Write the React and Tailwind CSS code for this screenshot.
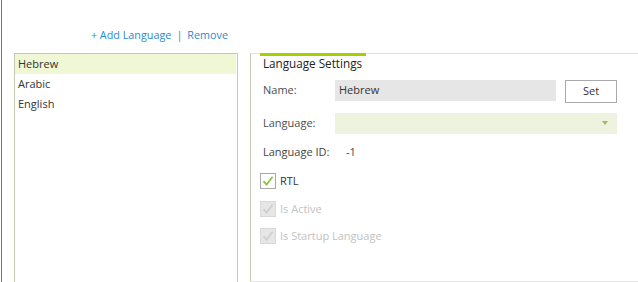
import React from "react";

const font = { fontFamily: '"Open Sans", "Noto Sans", sans-serif' };

function Check({ disabled }) {
  return (
    <div
      className={
        "w-4 h-4 flex items-center justify-center border " +
        (disabled ? "border-[#d9d9d9] bg-[#e6e6e6]" : "border-[#a8a8a8] bg-white")
      }
    >
      <svg width="12" height="12" viewBox="0 0 12 12">
        <path
          d="M1.5 6.2 L4.6 9.6 L10.6 1.8"
          fill="none"
          stroke={disabled ? "#cfcfcf" : "#8cc63f"}
          strokeWidth="1.8"
        />
      </svg>
    </div>
  );
}

export default function App() {
  return (
    <div className="w-[638px] h-[282px] bg-white overflow-hidden flex text-[11px]" style={font}>
      <div className="w-[1px] ml-[1px] h-full bg-[#6f8253]" />
      <div className="flex flex-col w-[224px] ml-[12px]">
        <div className="h-[53px] flex items-end justify-end pb-[12px] pr-[10px] text-[#2a8bd0] text-[10.8px] leading-none">
          <span>+ Add Language</span>
          <span className="ml-[5px] mr-[5px]">|</span>
          <span>Remove</span>
        </div>
        <div className="flex-1 border border-[#c6c8b4] border-b-0">
          <div className="h-[20px] bg-[#f0f7d4] flex items-center pl-[3px] text-[#333] mr-[1px]">Hebrew</div>
          <div className="h-[20px] flex items-center pl-[3px] text-[#333]">Arabic</div>
          <div className="h-[20px] flex items-center pl-[3px] text-[#333]">English</div>
        </div>
      </div>
      <div className="flex flex-col flex-1 ml-[12px] pt-[53px]">
        <div className="flex-1 border-l border-[#c6c8b4] border-t border-t-[#e2e2e2] border-b border-b-[#e6e6e6] relative">
          <div className="absolute left-[9px] top-[-1px] w-[106px] h-[3px] bg-[#a6d000]" />
          <div className="h-[20px] flex items-center pl-[12px] text-[#222] text-[11.7px]">Language Settings</div>
          <div className="flex items-start mt-[6px] h-[23px]">
            <div className="w-[84px] h-[21px] flex items-center pl-[12px] text-[#4d4d4d]">Name:</div>
            <div className="w-[221px] h-[21px] bg-[#e6e6e6] flex items-center pl-[4px] text-[#333]">Hebrew</div>
            <div className="ml-[9px] w-[52px] h-[23px] border border-[#a9a9a9] flex items-center justify-center text-[#333]">Set</div>
          </div>
          <div className="flex items-center mt-[10px] h-[21px]">
            <div className="w-[84px] pl-[12px] text-[#4d4d4d]">Language:</div>
            <div className="w-[282px] h-[21px] bg-[#eef3df] flex items-center justify-end pr-[9px]">
              <svg width="6" height="5" viewBox="0 0 6 5">
                <path d="M0 0 H6 L3 4 Z" fill="#a3b66e" />
              </svg>
            </div>
          </div>
          <div className="flex items-center mt-[8px] h-[20px] text-[#444]">
            <div className="w-[95px] pl-[12px]">Language ID:</div>
            <div>-1</div>
          </div>
          <div className="flex flex-col pl-[9px] mt-[11px]">
            <div className="flex items-center gap-[4px] text-[#333] h-[16px]">
              <Check />
              <span>RTL</span>
            </div>
            <div className="flex items-center gap-[4px] text-[#c2c2c2] h-[16px] mt-[12px]">
              <Check disabled />
              <span>Is Active</span>
            </div>
            <div className="flex items-center gap-[4px] text-[#c2c2c2] h-[16px] mt-[11px]">
              <Check disabled />
              <span>Is Startup Language</span>
            </div>
          </div>
        </div>
      </div>
    </div>
  );
}
